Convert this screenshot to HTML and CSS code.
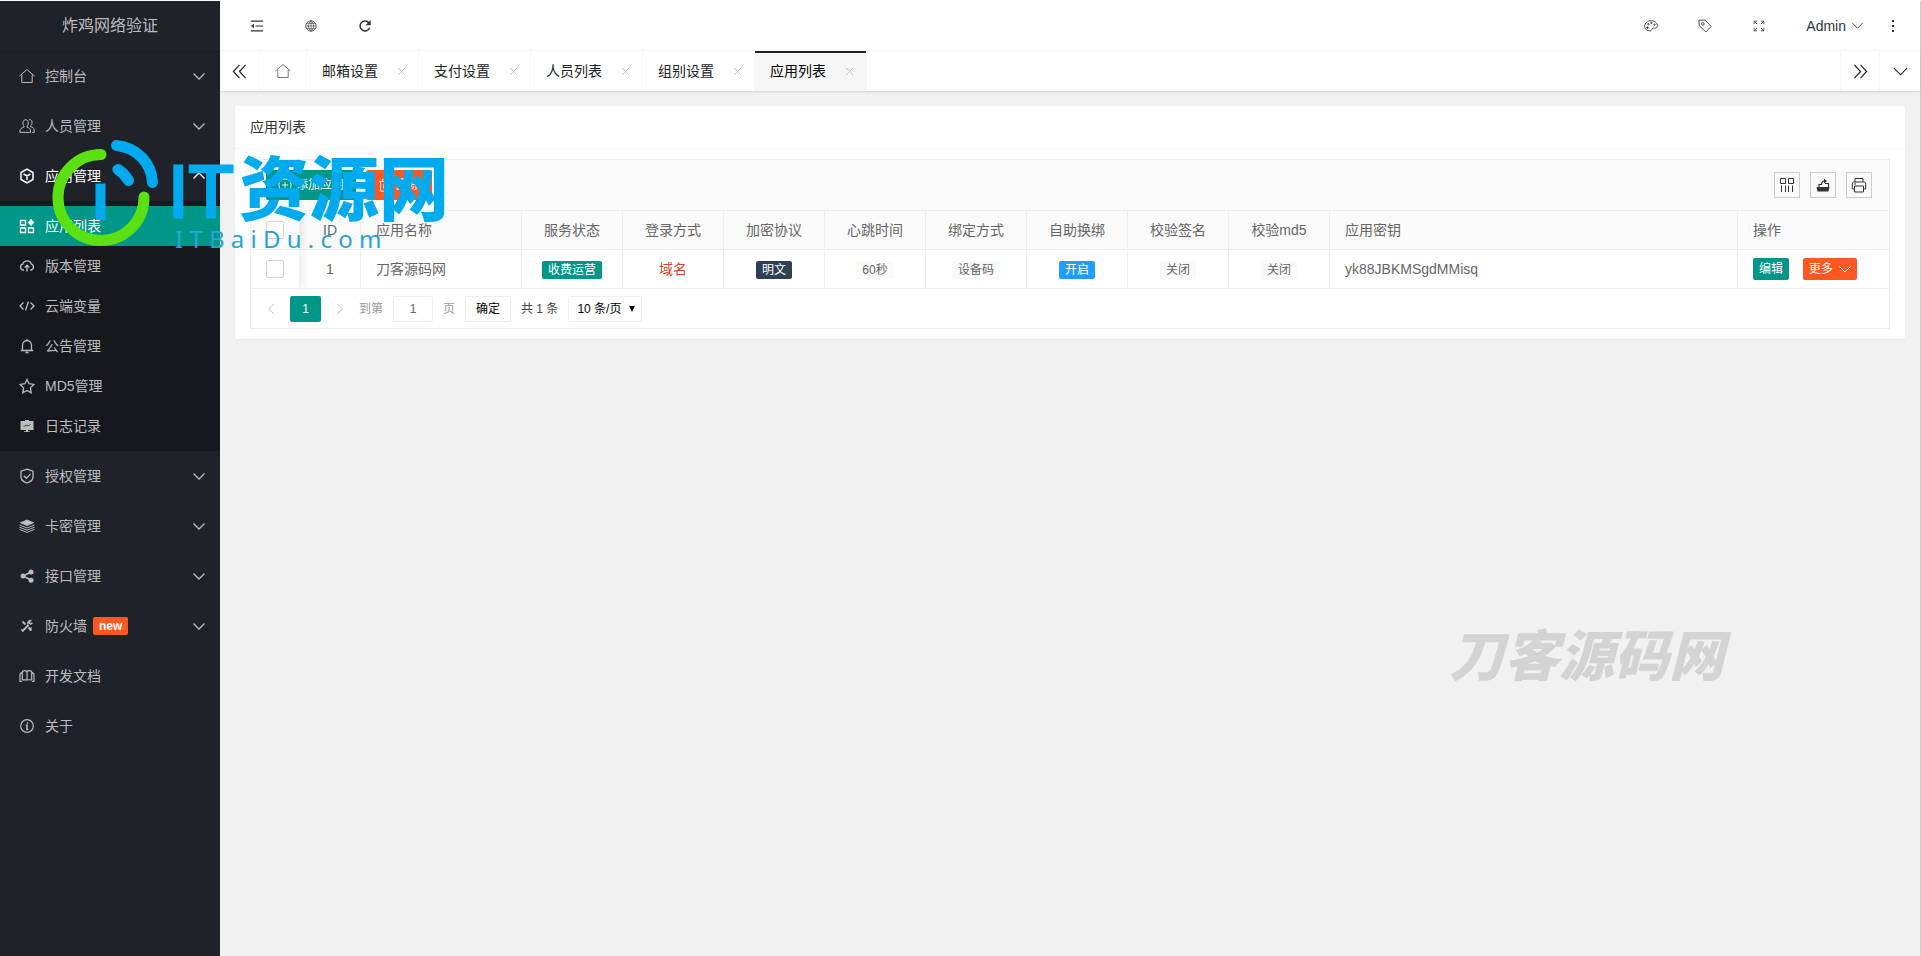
FILE: index.html
```html
<!DOCTYPE html>
<html lang="zh-CN">
<head>
<meta charset="utf-8">
<title>炸鸡网络验证</title>
<link rel="stylesheet" href="styles.css">
</head>
<body>
<svg class="defs" aria-hidden="true">
  <symbol id="down" viewBox="0 0 12 12"><path d="M.5 3.500l5.500 5.500 5.500-5.500"/></symbol>
  <symbol id="home" viewBox="0 0 16 16"><path d="M.5 8L8 1.500 15.500 8M2.800 6.500v8h10.400v-8"/></symbol>
  <symbol id="close" viewBox="0 0 10 10"><path d="M1 1l8 8M9 1l-8 8"/></symbol>
</svg>
<div class="app">
  <aside class="side">
    <div class="brand">炸鸡网络验证</div>
    <nav class="menu">
      <a class="item" href="#"><svg class="ico"><use href="#home"/></svg><span>控制台</span><svg class="arrow"><use href="#down"/></svg></a>
      <a class="item" href="#"><svg class="ico" viewBox="0 0 16 16"><path d="M4.200 3.700a2.600 2.800 0 0 1 5 0c.5 1.800-.2 3.500-1.200 4.400v1c2 .8 3.500 1.400 3.500 3.800v1.500H.9v-1.500C.9 10.500 3 10 5 9.100v-1C4 7.200 3.700 5.500 4.200 3.700zM10 1.500c2.500 0 3.500 1.800 3 4-.2 1-.7 1.700-1.300 2.200v1c2 .8 3.500 1.300 3.500 3.400v2.300h-2"/></svg><span>人员管理</span><svg class="arrow"><use href="#down"/></svg></a>
      <a class="item open" href="#"><svg class="ico" viewBox="0 0 16 16"><path stroke-width="1.500" d="M8 1.200l6 3.300v7L8 14.800l-6-3.300v-7zM4.500 6L8 8l3.500-2M8 8v4"/></svg><span>应用管理</span><svg class="arrow up"><use href="#down"/></svg></a>
      <div class="sub">
        <a class="item active" href="#"><svg class="ico" viewBox="0 0 16 16"><path stroke-width="1.300" d="M1.500 2.500h5v4.500h-5zM1.500 10h5v4.500h-5zM9.500 10h5v4.500h-5z"/><path class="solid" d="M12 .8l3.300 3.700L12 8 8.700 4.500z"/></svg><span>应用列表</span></a>
        <a class="item" href="#"><svg class="ico" viewBox="0 0 16 16"><path stroke-width="1.400" d="M5 12H4A3 3 0 0 1 3.700 6.200 4.500 4.500 0 0 1 12.400 6.200 3 3 0 0 1 12 12h-1M8 13.500V7.500M5.700 9.500L8 7.300l2.300 2.200"/></svg><span>版本管理</span></a>
        <a class="item" href="#"><svg class="ico" viewBox="0 0 16 16"><path stroke-width="1.300" d="M4.500 4.500L1 8l3.500 3.500M11.500 4.500L15 8l-3.500 3.500M9.500 3.500l-3 9"/></svg><span>云端变量</span></a>
        <a class="item" href="#"><svg class="ico" viewBox="0 0 16 16"><path stroke-width="1.300" d="M1.800 12.500h12.400M3.500 12.500V7.200a4.500 4.700 0 0 1 9 0v5.300M8 2.500V1.200M6.500 14.500h3"/></svg><span>公告管理</span></a>
        <a class="item" href="#"><svg class="ico" viewBox="0 0 16 16"><path stroke-width="1.300" d="M8 1.500l2 4.200 4.900.7-3.500 3.500.8 4.900L8 12.500l-4.200 2.300.8-4.900L1.100 6.400 6 5.700z"/></svg><span>MD5管理</span></a>
        <a class="item" href="#"><svg class="ico" viewBox="0 0 16 16"><path class="solid" d="M1.500 3H6V2h4v1h4.500v9H9v1.200h2v.8H5v-.8h2V12H1.500z"/><path class="cut" stroke-width=".7" d="M4.500 8.500L7 7.300l2 .5 2.500-1.300"/></svg><span>日志记录</span></a>
      </div>
      <a class="item" href="#"><svg class="ico" viewBox="0 0 16 16"><path stroke-width="1.300" d="M8 1.200l6 2V9c0 3-3 5-6 6-3-1-6-3-6-6V3.200zM4.800 7.800l2.500 2.500 4.200-4.200"/></svg><span>授权管理</span><svg class="arrow"><use href="#down"/></svg></a>
      <a class="item" href="#"><svg class="ico" viewBox="0 0 16 16"><path class="solid" d="M8 1.500l7.500 3.300L8 8 .5 4.800z"/><path d="M.5 7L8 10l7.500-3M.5 9.200L8 12.200l7.500-3M.5 11.400L8 14.400l7.500-3"/></svg><span>卡密管理</span><svg class="arrow"><use href="#down"/></svg></a>
      <a class="item" href="#"><svg class="ico" viewBox="0 0 16 16"><path stroke-width="1.500" d="M12 4L4 8l8 4"/><circle class="solid" cx="12" cy="4" r="2.500"/><circle class="solid" cx="4" cy="8" r="2.500"/><circle class="solid" cx="12" cy="12.200" r="2.500"/></svg><span>接口管理</span><svg class="arrow"><use href="#down"/></svg></a>
      <a class="item" href="#"><svg class="ico" viewBox="0 0 16 16"><path stroke-width="1.800" d="M3.500 3.500l3 3M9.500 9.500l3 3M3.500 13l6-6"/><path stroke-width="1.400" d="M13.500 4.800l-2 1.200-1.500-1.500 1.500-2a3 3 0 0 0-2.500 4M2.300 11.500l2 2M10 12l2.500-2.500"/></svg><span>防火墙</span><b class="new">new</b><svg class="arrow"><use href="#down"/></svg></a>
      <a class="item" href="#"><svg class="ico" viewBox="0 0 16 16"><path stroke-width="1.200" d="M1 14V6l1.700-1.500M15 14V6l-1.700-1.500M3.300 12.500V4.200c0-2 4.700-2 4.700 0v8.300c0-1-4.700-1-4.700 0zM8 4.200c0-2 4.700-2 4.700 0v8.300c0-1-4.700-1-4.700 0M1 13.500h2M13 13.500h2"/></svg><span>开发文档</span></a>
      <a class="item" href="#"><svg class="ico" viewBox="0 0 16 16"><circle cx="8" cy="8" r="6.300" stroke-width="1.200"/><path stroke-width="1.400" d="M8.500 4.200v1.500M6.700 7.300h1.500l-.4 4h1.500"/></svg><span>关于</span></a>
    </nav>
  </aside>

  <div class="main">
    <header class="top">
      <div class="group">
        <button class="tool" aria-label="收起菜单"><svg viewBox="0 0 16 16"><path stroke-width="1.400" d="M1 2.500h14M6.500 8H15M1 13.500h14"/><path class="solid" d="M1 8l3.500-2.500v5z"/></svg></button>
        <button class="tool" aria-label="网站"><svg class="small" viewBox="0 0 16 16"><circle cx="8" cy="8" r="7"/><path stroke-width=".8" d="M8 1C3.500 5 3.500 11 8 15M8 1c4.500 4 4.500 10 0 14M8 1v14M1 8h14M2.500 4.500h11M2.500 11.500h11"/></svg></button>
        <button class="tool" aria-label="刷新"><svg viewBox="0 0 16 16"><path stroke-width="1.700" d="M13.300 10A5.700 5.700 0 1 1 12.500 4.500"/><path class="solid" d="M14.500 1v6h-6z"/></svg></button>
      </div>
      <div class="group right">
        <button class="tool" aria-label="主题"><svg viewBox="0 0 16 16"><path d="M4.500 13.200C2 12.500.8 10.500.8 8.200.8 4.500 4 2 8 2s7.200 2.300 7.200 5.500c0 3.500-2.700 3-4.200 2.800-1.500 0-1.700 1-2.200 2-.8 1.700-2.500 1.400-4.300.9z"/><circle class="solid" cx="4" cy="10" r="1.300"/><circle cx="5" cy="6" r=".8"/><circle cx="8.500" cy="4.500" r=".8"/><circle cx="12" cy="6.500" r=".8"/></svg></button>
        <button class="tool" aria-label="便签"><svg viewBox="0 0 16 16"><path d="M1 1.500l7-.3 7 7.300-6 6.300-7.500-7z"/><circle cx="5.500" cy="5.500" r="1.500"/></svg></button>
        <button class="tool" aria-label="全屏"><svg class="small" viewBox="0 0 16 16"><path d="M1.500 5.500v-4h4M1.500 1.500l4 4M10.500 1.500h4v4M14.500 1.500l-4 4M1.500 10.500v4h4M1.500 14.500l4-4M14.500 10.500v4h-4M14.500 14.500l-4-4"/></svg></button>
        <button class="user">Admin<svg><use href="#down"/></svg></button>
        <button class="more" aria-label="更多"><svg viewBox="0 0 4 14"><path class="solid" d="M1 1h2v2H1zM1 6h2v2H1zM1 11h2v2H1z"/></svg></button>
      </div>
    </header>

    <nav class="tabs">
      <button class="nav" aria-label="向左"><svg viewBox="0 0 16 16"><path stroke-width="1.300" d="M8 1L1.500 8 8 15M14.500 1L8 8l6.500 7"/></svg></button>
      <a class="hometab" href="#" aria-label="首页"><svg><use href="#home"/></svg></a>
      <a class="tab" href="#">邮箱设置<svg><use href="#close"/></svg></a>
      <a class="tab" href="#">支付设置<svg><use href="#close"/></svg></a>
      <a class="tab" href="#">人员列表<svg><use href="#close"/></svg></a>
      <a class="tab" href="#">组别设置<svg><use href="#close"/></svg></a>
      <a class="tab current" href="#">应用列表<svg><use href="#close"/></svg></a>
      <button class="nav end" aria-label="向右"><svg viewBox="0 0 16 16"><path stroke-width="1.300" d="M1.500 1L8 8l-6.500 7M8 1l6.500 7L8 15"/></svg></button>
      <button class="nav last" aria-label="展开"><svg viewBox="0 0 16 16"><path stroke-width="1.200" d="M1 4.500l7 7 7-7"/></svg></button>
    </nav>

    <main class="content">
      <section class="card">
        <h1 class="title">应用列表</h1>
        <div class="body">
          <div class="grid">
            <div class="bar">
              <button class="btn"><svg viewBox="0 0 16 16"><circle cx="8" cy="8" r="7"/><path d="M8 4.500v7M4.500 8h7"/></svg>添加应用</button>
              <button class="btn red"><svg viewBox="0 0 16 16"><path d="M1 4h14M5 4V1.500h6V4M3 4v11h10V4M6.500 7v5M9.500 7v5"/></svg>删除</button>
              <div class="tools">
                <button class="sq" aria-label="筛选列"><svg viewBox="0 0 16 16"><path d="M1.500 1.500h5v5h-5zM9.500 1.500h5v5h-5zM2.500 8.500V15M6.500 8.500V15M9.500 8.500V15M13.500 8.500V15"/></svg></button>
                <button class="sq" aria-label="导出"><svg viewBox="0 0 16 16"><path class="solid" d="M1.500 10h13l-1 4.500h-11z"/><path stroke-width="1.200" d="M4 10V7.500h3M10 6.500h3.500V10M6.500 8c0-2.500 1-4 3-4"/><path class="solid" d="M9 1.500L12 4 9 6.500z"/></svg></button>
                <button class="sq" aria-label="打印"><svg viewBox="0 0 16 16"><path d="M4 5V1.500h8V5M3.500 12H1.300V7c0-1.500.7-2 2-2h9.400c1.300 0 2 .5 2 2v5h-2.200M3.500 9h9v6h-9zM3 7h2"/></svg></button>
              </div>
            </div>
            <table class="list">
              <colgroup><col class="c-check"><col class="c-id"><col class="c-name"><col class="c-mid" span="8"><col><col class="c-op"></colgroup>
              <thead>
                <tr><th class="pin"><input type="checkbox" aria-label="全选"></th><th>ID</th><th class="left">应用名称</th><th>服务状态</th><th>登录方式</th><th>加密协议</th><th>心跳时间</th><th>绑定方式</th><th>自助换绑</th><th>校验签名</th><th>校验md5</th><th class="left">应用密钥</th><th class="left">操作</th></tr>
              </thead>
              <tbody>
                <tr><td class="pin"><input type="checkbox" aria-label="选择第1行"></td><td>1</td><td class="left">刀客源码网</td><td><span class="tag green">收费运营</span></td><td class="domain">域名</td><td><span class="tag navy">明文</span></td><td><span class="tag">60秒</span></td><td><span class="tag">设备码</span></td><td><span class="tag blue">开启</span></td><td><span class="tag">关闭</span></td><td><span class="tag">关闭</span></td><td class="left">yk88JBKMSgdMMisq</td><td class="left"><div class="ops"><button class="mini">编辑</button><button class="mini red">更多<svg><use href="#down"/></svg></button></div></td></tr>
              </tbody>
            </table>
            <div class="pager">
              <button class="step" aria-label="上一页"><svg viewBox="0 0 8 12"><path d="M7 1L1.500 6 7 11"/></svg></button>
              <button class="page">1</button>
              <button class="step" aria-label="下一页"><svg viewBox="0 0 8 12"><path d="M1 1l5.500 5L1 11"/></svg></button>
              <label class="goto">到第<input type="text" value="1">页</label>
              <button class="ok">确定</button>
              <span class="total">共 1 条</span>
              <span class="limit"><select aria-label="每页条数"><option>10 条/页</option></select><svg viewBox="0 0 6 6"><path class="solid" d="M0 0h6L3 6z"/></svg></span>
            </div>
          </div>
        </div>
      </section>
    </main>
  </div>
</div>

<svg class="mark" width="420" height="130" viewBox="40 130 420 130">
  <path class="ring" d="M101 154.500a43 43 0 1 0 43 42.500"/>
  <path class="wave" d="M116.500 145.500c21 2 35 18 36 37M118 169.500q6.500 4 10.500 11"/>
  <path class="stem" d="M95.500 183.500h10V220h-10z"/>
  <text class="it" x="168" y="217">IT</text>
  <text class="cn" x="239" y="215">资源网</text>
  <text class="site" x="175" y="248">I T B a i D u . c o m</text>
</svg>
<div class="ghost">刀客源码网</div>
</body>
</html>
```

FILE: styles.css
```css
* { box-sizing: border-box; }
body {
  margin: 0;
  padding-top: 1px;
  background: #fff;
  color: #333;
  font: 14px/20px "Liberation Sans", "Noto Sans CJK SC", sans-serif;
  position: relative;
  overflow: hidden;
}
a { color: inherit; text-decoration: none; }
button, input, select { font: inherit; color: inherit; margin: 0; padding: 0; border: 0; background: none; }
svg { fill: none; stroke: currentColor; flex: none; }
.solid { fill: currentColor; stroke: none; }
.defs { position: absolute; width: 0; height: 0; }

.app { display: flex; min-height: calc(100vh - 1px); border-right: 1px solid #ccc; }

/* Sidebar */
.side { width: 220px; flex: none; background: #20222a; color: #bcbdbf; }
.brand { height: 50px; display: flex; align-items: center; justify-content: center; font-size: 16px; box-shadow: 0 1px 2px rgba(0, 0, 0, .15); }
.item { display: flex; align-items: center; height: 50px; padding: 0 15px 0 19px; }
.ico { width: 16px; height: 16px; margin-right: 10px; }
.arrow { width: 12px; height: 12px; margin-left: auto; stroke-width: 1.300; }
.arrow.up { transform: rotate(180deg); }
.open { color: #fff; }
.sub { background: #17181d; padding: 5px 0; }
.sub .item { height: 40px; }
.sub .active { background: #009688; color: #fff; }
.cut { stroke: #17181d; }
.new { height: 18px; margin-left: 6px; padding: 0 6px; border-radius: 2px; background: #ff5722; color: #fff; font-size: 12px; line-height: 18px; }

/* Header */
.main { flex: 1; min-width: 0; background: #f1f1f1; display: flex; flex-direction: column; }
.top { display: flex; justify-content: space-between; height: 50px; padding: 0 12px 0 10px; background: #fff; border-bottom: 1px solid #f6f6f6; }
.group { display: flex; align-items: center; }
.tool { width: 54px; height: 40px; display: flex; align-items: center; justify-content: center; }
.tool svg { width: 14px; height: 14px; }
.tool .small { width: 12px; height: 12px; }
.user { display: flex; align-items: center; gap: 6px; margin-left: 20px; }
.user svg { width: 11px; height: 11px; }
.more { width: 30px; margin-left: 15px; display: flex; justify-content: center; }
.more svg { width: 4px; height: 14px; }

/* Page tabs */
.tabs { display: flex; height: 40px; background: #fff; color: #222; box-shadow: 0 1px 2px rgba(0, 0, 0, .12); }
.nav { width: 40px; display: flex; align-items: center; justify-content: center; border-right: 1px solid #f6f6f6; }
.nav svg { width: 15px; height: 15px; }
.end { margin-left: auto; border-left: 1px solid #f6f6f6; }
.last { border: 0; }
.hometab { width: 47px; display: flex; align-items: center; justify-content: center; border-right: 1px solid #f6f6f6; color: #777; }
.hometab svg { width: 16px; height: 16px; }
.tab { width: 112px; display: flex; align-items: center; justify-content: space-between; padding: 0 12px 0 15px; border-right: 1px solid #f6f6f6; }
.tab svg { width: 9px; height: 9px; color: #bbb; }
.current { background: #f6f6f6; color: #000; box-shadow: inset 0 2px #20222a; }

/* Card */
.content { padding: 15px; }
.card { background: #fff; border-radius: 2px; box-shadow: 0 1px 2px rgba(0, 0, 0, .05); }
.title { margin: 0; height: 43px; padding: 0 15px; border-bottom: 1px solid #f6f6f6; font-size: 14px; font-weight: 400; line-height: 42px; }
.body { padding: 10px 15px; }
.grid { border: 1px solid #eee; color: #666; }
.bar { display: flex; align-items: center; gap: 10px; height: 51px; padding: 0 17px 0 15px; background: #fafafa; border-bottom: 1px solid #eee; }
.btn { height: 30px; padding: 0 12px; border-radius: 2px; background: #009688; color: #fff; font-size: 12px; display: flex; align-items: center; gap: 4px; }
.btn svg { width: 14px; height: 14px; }
.red { background: #ff5722; }
.tools { display: flex; gap: 10px; margin-left: auto; }
.sq { width: 26px; height: 26px; border: 1px solid #ccc; color: #333; display: flex; align-items: center; justify-content: center; }
.sq svg { width: 16px; height: 16px; }

.list { width: 100%; table-layout: fixed; border-spacing: 0; }
.c-check { width: 49px; }
.c-id { width: 61px; }
.c-name { width: 161px; }
.c-mid { width: 101px; }
.c-op { width: 151px; }
.list th, .list td { height: 39px; padding: 0; border: solid #eee; border-width: 0 1px 1px 0; text-align: center; font-weight: 400; }
.list th { background: #fafafa; }
.list .left { text-align: left; padding-left: 15px; }
.list tr > :last-child { border-right: 0; }
.list .pin { position: relative; box-shadow: 3px 0 8px rgba(0, 0, 0, .08); clip-path: inset(0 -12px 0 0); }
.list input { appearance: none; display: block; width: 18px; height: 18px; margin-left: 15px; border: 1px solid #d2d2d2; border-radius: 2px; background: #fff; }
.tag { display: inline-block; height: 18px; padding: 0 6px; border-radius: 2px; background: #fafafa; font-size: 12px; line-height: 18px; vertical-align: middle; }
.green { background: #009688; color: #fff; }
.navy { background: #2f4056; color: #fff; }
.blue { background: #1e9fff; color: #fff; }
.list .domain { color: #d0452b; }
.ops { display: flex; gap: 14px; }
.mini { display: flex; align-items: center; gap: 6px; height: 22px; padding: 0 6px; border-radius: 2px; background: #009688; color: #fff; font-size: 12px; }
.mini.red { background: #ff5722; }
.mini svg { width: 12px; height: 12px; }

/* Pagination */
.pager { display: flex; align-items: center; height: 39px; padding-left: 1px; font-size: 12px; }
.step { width: 38px; height: 26px; display: flex; align-items: center; justify-content: center; color: #c2c2c2; }
.step svg { width: 8px; height: 12px; }
.page { width: 31px; height: 26px; border-radius: 2px; background: #009688; color: #fff; }
.goto { display: flex; align-items: center; gap: 10px; color: #999; }
.goto input { width: 40px; height: 26px; border: 1px solid #eee; border-radius: 2px; color: #666; text-align: center; }
.ok { width: 46px; height: 26px; margin: 0 10px; border: 1px solid #eee; border-radius: 2px; color: #000; }
.total { color: #444; }
.limit { display: flex; align-items: center; width: 74px; height: 26px; margin-left: 10px; padding: 0 6px 0 8px; border: 1px solid #eee; border-radius: 2px; color: #000; }
.limit select { appearance: none; flex: 1; min-width: 0; }
.limit svg { width: 6px; height: 6px; }

/* Watermarks laid over the page */
.mark { position: absolute; left: 40px; top: 130px; stroke: none; pointer-events: none; }
.ring, .wave { stroke-width: 11; stroke-linecap: round; }
.ring { stroke: #5be013; }
.wave { stroke: #00aaef; }
.stem, .it, .cn { fill: #00aaef; }
.it { font: 400 74px "Liberation Sans", sans-serif; stroke: #00aaef; stroke-width: 3px; }
.cn { font: 900 70px "Noto Sans CJK SC", sans-serif; }
.site { fill: #2aa3d3; font: 24px "Noto Sans", sans-serif; }
.ghost { position: absolute; right: 197px; top: 625px; color: #d3d3d3; font: italic 900 55px/55px "Noto Sans CJK SC", sans-serif; pointer-events: none; }
```
